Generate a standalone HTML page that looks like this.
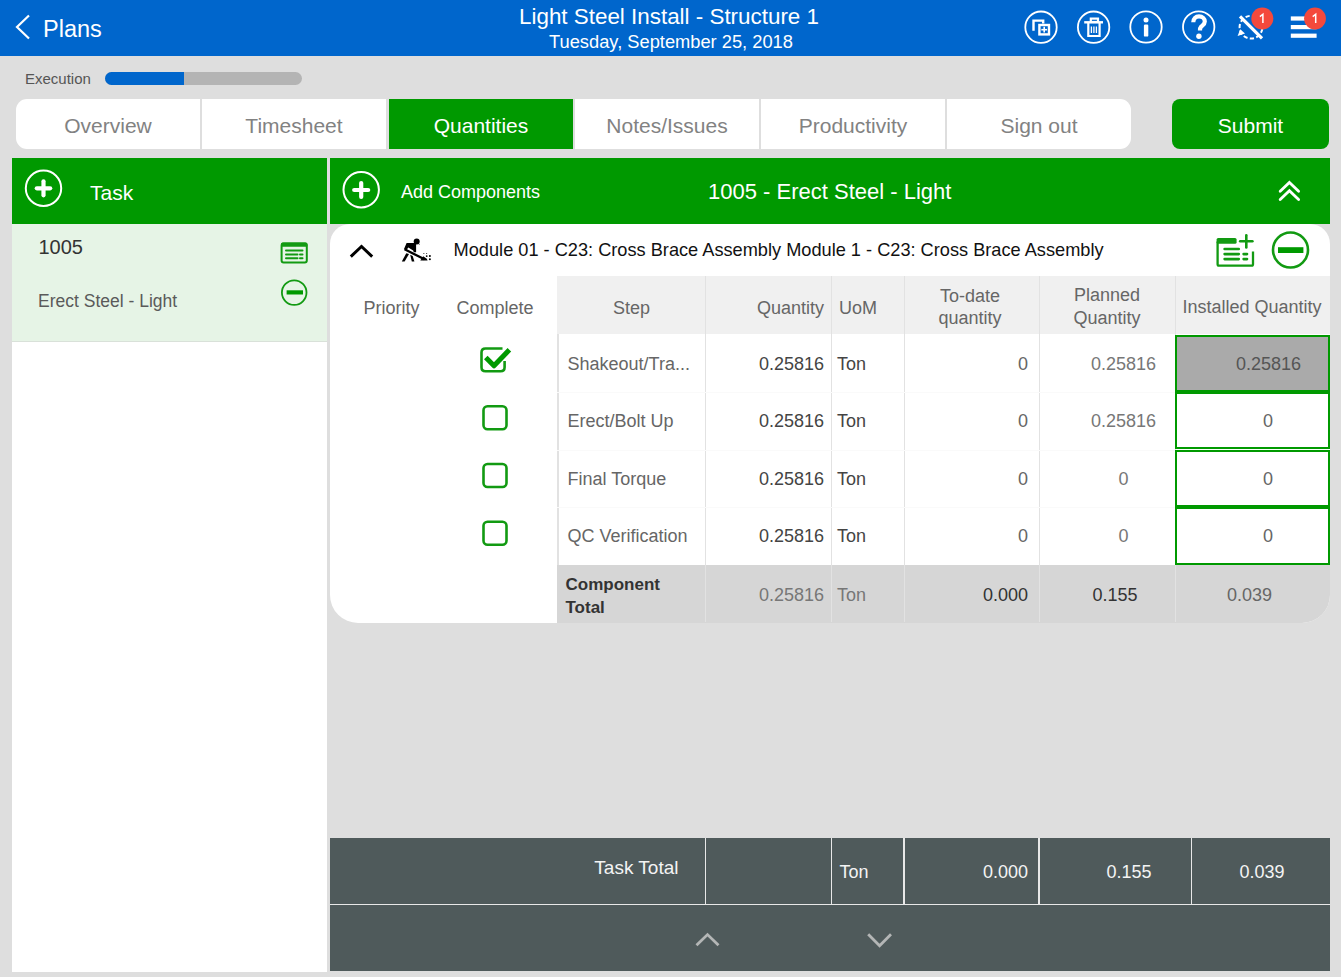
<!DOCTYPE html>
<html><head><meta charset="utf-8">
<style>
*{margin:0;padding:0;box-sizing:border-box}
html,body{width:1341px;height:977px;overflow:hidden;background:#dedede;font-family:"Liberation Sans",sans-serif}
.a{position:absolute}
.t{position:absolute;white-space:nowrap;line-height:1}
.r{text-align:right}
.c{text-align:center}
#top{left:0;top:0;width:1341px;height:56px;background:#0066cc}
.tab{position:absolute;top:99px;height:50px;background:#fff}
.tabt{position:absolute;top:115px;font-size:21px;color:#828282;line-height:1;text-align:center;white-space:nowrap}
</style></head><body>
<!-- top bar -->
<div id="top" class="a"></div>
<svg class="a" style="left:0;top:0" width="1341" height="56">
  <polyline points="29,15.5 17,27 29,38.5" fill="none" stroke="#fff" stroke-width="2.2"/>
</svg>
<div class="t" style="left:43px;top:17.5px;font-size:23.5px;color:#fff">Plans</div>
<div class="t c" style="left:469px;width:400px;top:6.2px;font-size:22.4px;color:#fff">Light Steel Install - Structure 1</div>
<div class="t c" style="left:471px;width:400px;top:33px;font-size:18.3px;color:#fff">Tuesday, September 25, 2018</div>

<!-- execution -->
<div class="t" style="left:25px;top:71.3px;font-size:15px;color:#555">Execution</div>
<div class="a" style="left:105px;top:72px;width:197px;height:13px;border-radius:6.5px;background:#b4b4b4;overflow:hidden"><div class="a" style="left:0;top:0;width:79px;height:13px;background:#0066cc"></div></div>

<!-- tabs -->
<div class="tab" style="left:16px;width:184px;border-radius:11px 0 0 11px"></div>
<div class="tab" style="left:202px;width:184px"></div>
<div class="tab" style="left:389px;width:184px;background:#009900"></div>
<div class="tab" style="left:575px;width:184px"></div>
<div class="tab" style="left:761px;width:184px"></div>
<div class="tab" style="left:947px;width:184px;border-radius:0 11px 11px 0"></div>
<div class="tabt" style="left:16px;width:184px">Overview</div>
<div class="tabt" style="left:202px;width:184px">Timesheet</div>
<div class="tabt" style="left:389px;width:184px;color:#fff">Quantities</div>
<div class="tabt" style="left:575px;width:184px">Notes/Issues</div>
<div class="tabt" style="left:761px;width:184px">Productivity</div>
<div class="tabt" style="left:947px;width:184px">Sign out</div>
<div class="a" style="left:1172px;top:99px;width:157px;height:50px;border-radius:8px;background:#009900"></div>
<div class="tabt" style="left:1172px;width:157px;color:#fff">Submit</div>

<!-- left panel -->
<div class="a" style="left:12px;top:158px;width:315px;height:814px;background:#fff"></div>
<div class="a" style="left:12px;top:158px;width:315px;height:66px;background:#009900"></div>
<div class="a" style="left:12px;top:224px;width:315px;height:118px;background:#e6f4e6;border-bottom:1px solid #d9e1d9"></div>
<div class="t" style="left:90px;top:182.2px;font-size:21px;color:#fff">Task</div>
<div class="t" style="left:38.5px;top:237px;font-size:20px;color:#333">1005</div>
<div class="t" style="left:38px;top:293px;font-size:17.5px;color:#5a5a5a">Erect Steel - Light</div>

<!-- right header -->
<div class="a" style="left:330px;top:158px;width:1000px;height:66px;background:#009900"></div>
<div class="t" style="left:401px;top:182.5px;font-size:18px;color:#fff">Add Components</div>
<div class="t" style="left:708px;top:181px;font-size:22px;color:#fff">1005 - Erect Steel - Light</div>

<!-- card -->
<div class="a" style="left:330px;top:224px;width:1000px;height:399px;background:#fff;border-radius:20px 20px 28px 28px"></div>
<div class="a" style="left:557px;top:276px;width:773px;height:58px;background:#f0f0f0"></div>
<div class="a" style="left:557px;top:565px;width:773px;height:58px;background:#d6d6d6;border-bottom-right-radius:28px"></div>

<!-- footer -->
<div class="a" style="left:330px;top:838px;width:1000px;height:133px;background:#4f5a5b"></div>


<!-- table lines -->
<div class="a" style="left:557px;top:334px;width:1.5px;height:231px;background:#e2e2e2"></div>
<div class="a" style="left:704.5px;top:276px;width:1.5px;height:346px;background:#e2e2e2"></div>
<div class="a" style="left:830.5px;top:276px;width:1.5px;height:346px;background:#e2e2e2"></div>
<div class="a" style="left:903.5px;top:276px;width:1.5px;height:346px;background:#e2e2e2"></div>
<div class="a" style="left:1038.5px;top:276px;width:1.5px;height:346px;background:#e2e2e2"></div>
<div class="a" style="left:1174.5px;top:276px;width:1.5px;height:346px;background:#e2e2e2"></div>
<div class="a" style="left:557px;top:392px;width:618px;height:1px;background:#fafafa"></div>
<div class="a" style="left:557px;top:450px;width:618px;height:1px;background:#fafafa"></div>
<div class="a" style="left:557px;top:507px;width:618px;height:1px;background:#fafafa"></div>

<!-- header texts -->
<div class="t" style="left:453.6px;top:241.2px;font-size:18.2px;color:#111">Module 01 - C23: Cross Brace Assembly Module 1 - C23: Cross Brace Assembly</div>
<div class="t" style="left:363.4px;top:298.8px;font-size:18px;color:#666">Priority</div>
<div class="t" style="left:456.5px;top:298.8px;font-size:18px;color:#666">Complete</div>
<div class="t" style="left:613px;top:298.8px;font-size:18px;color:#666">Step</div>
<div class="t r" style="left:624px;width:200px;top:298.8px;font-size:18px;color:#666">Quantity</div>
<div class="t" style="left:839px;top:298.8px;font-size:18px;color:#666">UoM</div>
<div class="t c" style="left:870px;width:200px;top:286.5px;font-size:18px;color:#666">To-date</div>
<div class="t c" style="left:870px;width:200px;top:308.8px;font-size:18px;color:#666">quantity</div>
<div class="t c" style="left:1007px;width:200px;top:286.3px;font-size:18px;color:#666">Planned</div>
<div class="t c" style="left:1007px;width:200px;top:309.3px;font-size:18px;color:#666">Quantity</div>
<div class="t c" style="left:1152px;width:200px;top:297.7px;font-size:18px;color:#666">Installed Quantity</div>
<div class="t" style="left:567.5px;top:354.8px;font-size:18px;color:#666">Shakeout/Tra...</div>
<div class="t r" style="left:624px;width:200px;top:354.8px;font-size:18px;color:#444">0.25816</div>
<div class="t" style="left:837px;top:354.8px;font-size:18px;color:#444">Ton</div>
<div class="t r" style="left:828px;width:200px;top:354.8px;font-size:18px;color:#666">0</div>
<div class="t c" style="left:1023.5px;width:200px;top:354.8px;font-size:18px;color:#777">0.25816</div>
<div class="t" style="left:567.5px;top:412.3px;font-size:18px;color:#666">Erect/Bolt Up</div>
<div class="t r" style="left:624px;width:200px;top:412.3px;font-size:18px;color:#444">0.25816</div>
<div class="t" style="left:837px;top:412.3px;font-size:18px;color:#444">Ton</div>
<div class="t r" style="left:828px;width:200px;top:412.3px;font-size:18px;color:#666">0</div>
<div class="t c" style="left:1023.5px;width:200px;top:412.3px;font-size:18px;color:#777">0.25816</div>
<div class="t" style="left:567.5px;top:469.8px;font-size:18px;color:#666">Final Torque</div>
<div class="t r" style="left:624px;width:200px;top:469.8px;font-size:18px;color:#444">0.25816</div>
<div class="t" style="left:837px;top:469.8px;font-size:18px;color:#444">Ton</div>
<div class="t r" style="left:828px;width:200px;top:469.8px;font-size:18px;color:#666">0</div>
<div class="t c" style="left:1023.5px;width:200px;top:469.8px;font-size:18px;color:#777">0</div>
<div class="t" style="left:567.5px;top:527.3px;font-size:18px;color:#666">QC Verification</div>
<div class="t r" style="left:624px;width:200px;top:527.3px;font-size:18px;color:#444">0.25816</div>
<div class="t" style="left:837px;top:527.3px;font-size:18px;color:#444">Ton</div>
<div class="t r" style="left:828px;width:200px;top:527.3px;font-size:18px;color:#666">0</div>
<div class="t c" style="left:1023.5px;width:200px;top:527.3px;font-size:18px;color:#777">0</div>
<div class="a" style="left:1175px;top:335px;width:154.5px;height:56.8px;border:2.7px solid #009900;background:#aaaaaa"></div>
<div class="a" style="left:1175px;top:391.8px;width:154.5px;height:57.7px;border:2.7px solid #009900;background:#fff"></div>
<div class="a" style="left:1175px;top:449.5px;width:154.5px;height:57.8px;border:2.7px solid #009900;background:#fff"></div>
<div class="a" style="left:1175px;top:507.3px;width:154.5px;height:57.9px;border:2.7px solid #009900;background:#fff"></div>
<div class="t c" style="left:1168.5px;width:200px;top:354.8px;font-size:18px;color:#555">0.25816</div>
<div class="t c" style="left:1168px;width:200px;top:412.3px;font-size:18px;color:#666">0</div>
<div class="t c" style="left:1168px;width:200px;top:469.8px;font-size:18px;color:#666">0</div>
<div class="t c" style="left:1168px;width:200px;top:527.3px;font-size:18px;color:#666">0</div>
<div class="t" style="left:565.5px;top:572.8px;font-size:17px;font-weight:700;color:#333;line-height:23px">Component<br>Total</div>
<div class="t r" style="left:624px;width:200px;top:586.3px;font-size:18px;color:#777">0.25816</div>
<div class="t" style="left:837px;top:586.3px;font-size:18px;color:#777">Ton</div>
<div class="t r" style="left:828px;width:200px;top:586.3px;font-size:18px;color:#333">0.000</div>
<div class="t c" style="left:1015px;width:200px;top:586.3px;font-size:18px;color:#333">0.155</div>
<div class="t c" style="left:1149.5px;width:200px;top:586.3px;font-size:18px;color:#666">0.039</div>

<!-- footer lines/text -->
<div class="a" style="left:330px;top:903.5px;width:1000px;height:1.6px;background:#e8e8e8"></div>
<div class="a" style="left:704.5px;top:838px;width:1.6px;height:66px;background:#e8e8e8"></div>
<div class="a" style="left:830.5px;top:838px;width:1.6px;height:66px;background:#e8e8e8"></div>
<div class="a" style="left:903px;top:838px;width:1.6px;height:66px;background:#e8e8e8"></div>
<div class="a" style="left:1038px;top:838px;width:1.6px;height:66px;background:#e8e8e8"></div>
<div class="a" style="left:1190.5px;top:838px;width:1.6px;height:66px;background:#e8e8e8"></div>
<div class="t r" style="left:478.5px;width:200px;top:858.3px;font-size:19px;color:#f4f4f4">Task Total</div>
<div class="t" style="left:839.5px;top:862.8px;font-size:18px;color:#f4f4f4">Ton</div>
<div class="t r" style="left:828px;width:200px;top:862.6px;font-size:18px;color:#f4f4f4">0.000</div>
<div class="t c" style="left:1029px;width:200px;top:862.6px;font-size:18px;color:#f4f4f4">0.155</div>
<div class="t c" style="left:1162px;width:200px;top:862.6px;font-size:18px;color:#f4f4f4">0.039</div>
<svg class="a" style="left:0;top:0" width="1341" height="977">
<g fill="none" stroke="#fff" stroke-width="1.8">
  <circle cx="1041" cy="27.2" r="15.7"/>
  <circle cx="1093.6" cy="27.2" r="15.7"/>
  <circle cx="1146" cy="27" r="15.7"/>
  <circle cx="1198.7" cy="27" r="15.7"/>
</g>
<!-- copy plus -->
<g fill="none" stroke="#fff" stroke-width="2.4">
  <polyline points="1033.5,30.7 1033.5,20.6 1043.2,20.6 1043.2,23.5"/>
  <rect x="1039.4" y="25" width="9.6" height="9.4"/>
  <line x1="1044.2" y1="26.8" x2="1044.2" y2="32.6" stroke-width="1.6"/>
  <line x1="1041.3" y1="29.7" x2="1047.1" y2="29.7" stroke-width="1.6"/>
</g>
<!-- trash -->
<g fill="none" stroke="#fff" stroke-width="2.2">
  <rect x="1090.8" y="18.6" width="7.2" height="3.4"/>
  <line x1="1084.2" y1="22.3" x2="1103" y2="22.3" stroke-width="2.4"/>
  <polyline points="1088.3,22.5 1088.3,36 1099.6,36 1099.6,22.5"/>
  <line x1="1091.4" y1="26.5" x2="1091.4" y2="33" stroke-width="1.3"/>
  <line x1="1093.9" y1="26.5" x2="1093.9" y2="33" stroke-width="1.3"/>
  <line x1="1096.4" y1="26.5" x2="1096.4" y2="33" stroke-width="1.3"/>
</g>
<!-- info -->
<circle cx="1146" cy="19.9" r="2.5" fill="#fff"/>
<rect x="1143.9" y="24.6" width="4.4" height="12" rx="1.2" fill="#fff"/>
<!-- question -->
<path d="M1193.3,22.3 C1193.3,18.6 1195.7,16.4 1199,16.4 C1202.6,16.4 1204.8,18.7 1204.8,21.6 C1204.8,24.6 1202.2,25.6 1200.9,27 C1200.1,27.9 1200,28.8 1200,30.4" fill="none" stroke="#fff" stroke-width="4.2"/>
<circle cx="1198.9" cy="36.2" r="2.7" fill="#fff"/>
<!-- sync off -->
<circle cx="1251" cy="27.2" r="11.4" fill="none" stroke="#fff" stroke-width="2" stroke-dasharray="4.2 2.4" transform="rotate(8 1251 27.2)"/>
<polygon points="1237.6,36 1240.2,29.2 1245,33.6" fill="#fff"/>
<line x1="1240" y1="16.3" x2="1262" y2="38.4" stroke="#fff" stroke-width="3.2"/>
<circle cx="1262.3" cy="18.5" r="11" fill="#f4493c"/>
<!-- menu -->
<g fill="#fff">
  <rect x="1290.8" y="16.4" width="25.8" height="4.2"/>
  <rect x="1290.8" y="25" width="25.8" height="4.2"/>
  <rect x="1290.8" y="33.6" width="25.8" height="4.2"/>
</g>
<circle cx="1315" cy="18.5" r="10.9" fill="#f4493c"/>

<!-- left header plus -->
<circle cx="43.5" cy="188.3" r="17.7" fill="none" stroke="#fff" stroke-width="2"/>
<g stroke="#fff" stroke-width="4.2" stroke-linecap="round">
  <line x1="36.8" y1="188.3" x2="50.2" y2="188.3"/>
  <line x1="43.5" y1="181.3" x2="43.5" y2="195.3"/>
</g>
<!-- add components plus -->
<circle cx="361.2" cy="189.7" r="17.7" fill="none" stroke="#fff" stroke-width="2"/>
<g stroke="#fff" stroke-width="4.2" stroke-linecap="round">
  <line x1="354.2" y1="190" x2="368.2" y2="190"/>
  <line x1="361.2" y1="183.1" x2="361.2" y2="196.9"/>
</g>
<!-- double chevron -->
<g fill="none" stroke="#fff" stroke-width="2.8" stroke-linecap="round">
  <polyline points="1280.2,191.2 1289.4,182.4 1298.6,191.2"/>
  <polyline points="1280.2,199.6 1289.4,190.8 1298.6,199.6"/>
</g>

<!-- left panel table icon -->
<g fill="none" stroke="#129a12" stroke-width="2">
  <rect x="281.6" y="243.4" width="25.2" height="19.2" rx="2"/>
</g>
<rect x="281" y="242.6" width="26.4" height="4.2" rx="1.5" fill="#129a12"/>
<g stroke="#129a12" stroke-width="2" stroke-linecap="round">
  <line x1="286" y1="250.5" x2="302.5" y2="250.5"/>
  <line x1="286" y1="254.5" x2="297.5" y2="254.5"/>
  <line x1="300" y1="254.5" x2="302.5" y2="254.5"/>
  <line x1="286" y1="258.3" x2="297.5" y2="258.3"/>
  <line x1="300" y1="258.3" x2="302.5" y2="258.3"/>
</g>
<!-- left panel minus circle -->
<circle cx="294.2" cy="292.6" r="12.3" fill="none" stroke="#129a12" stroke-width="1.8"/>
<rect x="286.6" y="290.3" width="16.4" height="4.2" fill="#009900"/>

<!-- card chevron -->
<polyline points="350.8,256.6 361.5,246.5 372.2,256.6" fill="none" stroke="#000" stroke-width="3"/>
<!-- worker -->
<g fill="#000">
  <circle cx="416.7" cy="241.5" r="3"/>
  <path d="M418.6,243 L419.9,244.8 L418.8,244.6 Z"/>
  <path d="M406.6,243.1 L415.4,243.1 Q416.1,243.3 416.1,244 L416.1,252.3 L413.8,252.3 L413.2,250.6 L408.3,247.4 L406.5,250 L403.9,249.3 Z"/>
  <line x1="404.6" y1="249.3" x2="424.5" y2="259.3" stroke="#000" stroke-width="2.3"/>
  <path d="M420.3,260.5 L427.6,260.5 L426.8,258.8 L423.2,256.3 Z"/>
  <path d="M406.3,253.2 L409,254 L404.6,261.6 L401.8,261.6 Z"/>
  <path d="M410.2,254.8 L412.7,256 L414.4,261.6 L411.8,261.6 Z"/>
  <circle cx="423.9" cy="253.5" r="0.5"/>
  <circle cx="426.7" cy="253.5" r="0.5"/>
  <circle cx="426.7" cy="256.1" r="0.9"/>
  <circle cx="429.9" cy="256.1" r="1"/>
  <circle cx="429.9" cy="259.2" r="1"/>
</g>
<!-- table-plus icon -->
<path d="M1217.6,241.5 L1217.6,264.2 Q1217.6,265.6 1219,265.6 L1251.6,265.6 Q1253,265.6 1253,264.2 L1253,251.4" fill="none" stroke="#129a12" stroke-width="2.3"/>
<rect x="1216.6" y="238" width="20" height="5.8" rx="1.6" fill="#129a12"/>
<g stroke="#129a12" stroke-width="2.6" stroke-linecap="round">
  <line x1="1246.3" y1="235.2" x2="1246.3" y2="247.4"/>
  <line x1="1240.2" y1="241.2" x2="1252.4" y2="241.2"/>
  <line x1="1224.6" y1="249" x2="1238.8" y2="249"/>
  <line x1="1224.6" y1="254.1" x2="1238.8" y2="254.1"/>
  <line x1="1224.6" y1="259.1" x2="1238.8" y2="259.1"/>
  <line x1="1243.6" y1="254.1" x2="1247" y2="254.1"/>
  <line x1="1243.6" y1="259.1" x2="1247" y2="259.1"/>
</g>
<!-- card minus circle -->
<circle cx="1290.5" cy="250" r="17.5" fill="none" stroke="#129a12" stroke-width="2.6"/>
<rect x="1278" y="247.2" width="25.4" height="5.8" fill="#009900"/>

<!-- checkboxes -->
<g fill="none" stroke="#129a12" stroke-width="2.6">
  <path d="M502.5,348.5 L485.5,348.5 Q481.5,348.5 481.5,352.5 L481.5,367.3 Q481.5,371.3 485.5,371.3 L500.6,371.3 Q504.6,371.3 504.6,367.3 L504.6,361"/>
  <rect x="483.5" y="406.3" width="23" height="23" rx="4"/>
  <rect x="483.5" y="464" width="23" height="23" rx="4"/>
  <rect x="483.5" y="521.8" width="23" height="23" rx="4"/>
</g>
<polyline points="485.8,357.6 494,365.8 509.4,349.8" fill="none" stroke="#009900" stroke-width="5" stroke-linecap="butt" stroke-linejoin="round"/>

<!-- footer chevrons -->
<g fill="none" stroke="#b4b6b6" stroke-width="2.8">
  <polyline points="696.5,945.3 707.5,934.6 718.5,945.3"/>
  <polyline points="868.2,934.3 879.6,945.7 891,934.3"/>
</g>
</svg>
<svg class="a" style="left:0;top:0" width="1341" height="60">
<g fill="none" stroke="#fff" stroke-width="1.5">
  <path d="M1259.9,16.6 L1262.9,14.2 L1262.9,22.9"/>
  <path d="M1312.7,16.6 L1315.7,14.2 L1315.7,22.9"/>
</g>
</svg>

</body></html>
